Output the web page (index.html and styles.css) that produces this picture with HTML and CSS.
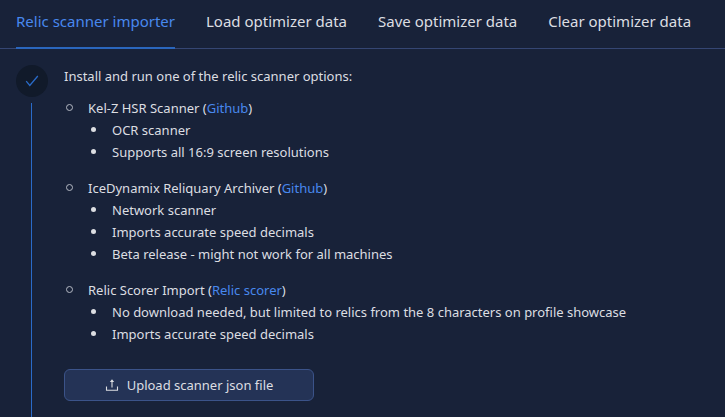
FILE: index.html
```html
<!DOCTYPE html>
<html lang="en">
<head>
<meta charset="utf-8">
<title>Relic scanner importer</title>
<link rel="stylesheet" href="styles.css">
</head>
<body>
<nav class="tabs" role="tablist">
  <button class="tab tab-active" role="tab" aria-selected="true">Relic scanner importer</button>
  <button class="tab" role="tab" aria-selected="false">Load optimizer data</button>
  <button class="tab" role="tab" aria-selected="false">Save optimizer data</button>
  <button class="tab" role="tab" aria-selected="false">Clear optimizer data</button>
</nav>
<main class="step">
  <div class="rail">
    <div class="step-icon">
      <svg width="14" height="14" viewBox="0 0 14 14" fill="none" stroke="currentColor" stroke-width="1.3" aria-hidden="true"><path d="M1.2 7.2 L4.8 11.4 L12.8 2"/></svg>
    </div>
    <div class="tail"></div>
  </div>
  <div class="content">
    <p class="intro">Install and run one of the relic scanner options:</p>
    <ul class="options">
      <li>Kel-Z HSR Scanner (<a href="#">Github</a>)
        <ul class="details">
          <li>OCR scanner</li>
          <li>Supports all 16:9 screen resolutions</li>
        </ul>
      </li>
      <li>IceDynamix Reliquary Archiver (<a href="#">Github</a>)
        <ul class="details">
          <li>Network scanner</li>
          <li>Imports accurate speed decimals</li>
          <li>Beta release - might not work for all machines</li>
        </ul>
      </li>
      <li>Relic Scorer Import (<a href="#">Relic scorer</a>)
        <ul class="details">
          <li>No download needed, but limited to relics from the 8 characters on profile showcase</li>
          <li>Imports accurate speed decimals</li>
        </ul>
      </li>
    </ul>
    <button class="upload">
      <svg width="14" height="14" viewBox="0 0 14 14" fill="none" stroke="currentColor" stroke-width="1.1" aria-hidden="true"><path d="M1.5 8.5v3.8h11V8.5M7 9.5V3"/><path d="M4.8 4 7 1.2 9.2 4Z" fill="currentColor" stroke="none"/></svg>
      <span>Upload scanner json file</span>
    </button>
  </div>
</main>
</body>
</html>
```
FILE: styles.css
```css
*,
*::before {
  box-sizing: border-box;
}

body {
  display: flex;
  flex-direction: column;
  min-height: 100vh;
  margin: 0;
  background: #182239;
  color: #dcdee2;
  font-family: "Segoe UI", "Noto Sans", "Open Sans", sans-serif;
  font-size: 13px;
  line-height: 22px;
}

button {
  font-family: inherit;
  color: inherit;
  cursor: pointer;
}

a {
  color: #4888ee;
  text-decoration: none;
}

ul,
p {
  margin: 0;
  padding: 0;
}

.tabs {
  display: flex;
  gap: 31px;
  padding: 0 16px;
  box-shadow: inset 0 -1px #354673;
}

.tab {
  padding: 8px 0 13px;
  border: 0;
  border-bottom: 2px solid transparent;
  background: none;
  font-size: 15px;
  line-height: 26px;
  white-space: nowrap;
}

.tab-active {
  border-color: #2a66bd;
  color: #4888ee;
}

.step {
  display: flex;
  flex: 1;
  gap: 16px;
  padding: 16px 16px 0;
}

.rail {
  display: flex;
  flex-direction: column;
  align-items: center;
  gap: 6px;
}

.step-icon {
  display: flex;
  align-items: center;
  justify-content: center;
  width: 32px;
  height: 32px;
  border-radius: 50%;
  background: #111a2a;
  color: #2a6bc9;
}

.tail {
  flex: 1;
  width: 1px;
  margin-right: 1px;
  background: #2a6bc9;
}

.content {
  flex: 1;
  padding-bottom: 16px;
}

.options {
  margin: 10px 0 24px;
  list-style: none;
}

.options > li {
  padding-left: 24px;
  margin-bottom: 14px;
}

.details {
  list-style: none;
}

.details > li {
  padding-left: 24px;
}

.options > li::before,
.details > li::before {
  content: "";
  display: inline-block;
  width: 7px;
  height: 7px;
  margin: 0 15px 2px -22px;
  border: 1px solid #b4b9c4;
  border-radius: 50%;
}

.details > li::before {
  width: 5px;
  height: 5px;
  margin: 0 16px 3px -21px;
  border: 0;
  background: #dcdee2;
}

.upload {
  display: flex;
  align-items: center;
  justify-content: center;
  gap: 8px;
  width: 250px;
  height: 32px;
  border: 1px solid #3b5389;
  border-radius: 6px;
  background: #243356;
  font-size: 13px;
}
```
